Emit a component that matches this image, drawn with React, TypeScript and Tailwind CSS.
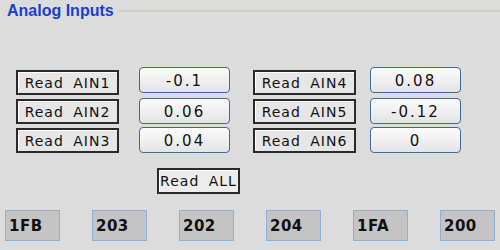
const readLeft = [
  { label: "Read AIN1", value: "-0.1" },
  { label: "Read AIN2", value: "0.06" },
  { label: "Read AIN3", value: "0.04" },
];
const readRight = [
  { label: "Read AIN4", value: "0.08" },
  { label: "Read AIN5", value: "-0.12" },
  { label: "Read AIN6", value: "0" },
];
const hex = ["1FB", "203", "202", "204", "1FA", "200"];

function ReadButton({ label }: { label: string }) {
  return (
    <div className="h-[25px] w-[103px] border-2 border-[#2a2a2a] bg-[#e6e6e6] shadow-[inset_1px_1px_0_#ffffff] flex items-center justify-center text-[14px] tracking-[1px] [word-spacing:4px] text-[#111] font-['DejaVu_Sans',sans-serif] leading-none">
      {label}
    </div>
  );
}

function ValueBox({ value }: { value: string }) {
  return (
    <div className="h-[26px] w-[91px] rounded-[4px] border border-[#3f6a9a] bg-gradient-to-b from-[#fbfbfb] to-[#e4e4e4] flex items-center justify-center text-[15px] tracking-[2px] text-[#111] font-['DejaVu_Sans',sans-serif] leading-none pt-[2px]">
      {value}
    </div>
  );
}

function Column({ rows, gap }: { rows: { label: string; value: string }[]; gap: string }) {
  return (
    <div className="flex flex-col gap-[3px]">
      {rows.map((r, i) => (
        <div key={r.label} className={"flex items-start " + gap}>
          <div className={i === 0 ? "pt-[3px]" : "pt-[1px]"}>
            <ReadButton label={r.label} />
          </div>
          <ValueBox value={r.value} />
        </div>
      ))}
    </div>
  );
}

export default function App() {
  return (
    <div className="w-[500px] h-[250px] bg-[#dcdcdc] overflow-hidden flex flex-col">
      <div className="flex items-center pl-[7px] pt-[1px] h-[21px]">
        <span className="text-[16px] font-bold text-[#1740d0] font-['Liberation_Sans',sans-serif] leading-none">
          Analog Inputs
        </span>
        <div className="flex-1 ml-[5px] h-[2px] bg-[#cfcfbf]" />
      </div>

      <div className="flex gap-[23px] pl-[16px] pt-[46px]">
        <Column rows={readLeft} gap="gap-[20px]" />
        <Column rows={readRight} gap="gap-[14px]" />
      </div>

      <div className="pl-[157px] pt-[15px]">
        <div className="h-[26px] w-[83px] border-2 border-[#2a2a2a] bg-[#ececec] shadow-[inset_1px_1px_0_#ffffff] flex items-center justify-center text-[14px] tracking-[1px] [word-spacing:4px] text-[#111] font-['DejaVu_Sans',sans-serif] leading-none">
          Read ALL
        </div>
      </div>

      <div className="flex justify-between px-[5px] pt-[16px]">
        {hex.map((h) => (
          <div
            key={h}
            className="h-[31px] w-[55px] border border-[#8eb0d2] bg-[#c4c4c4] flex items-center pl-[3px] pt-[2px] text-[15px] font-bold tracking-[0.5px] text-[#111] font-['DejaVu_Sans',sans-serif] leading-none"
          >
            {h}
          </div>
        ))}
      </div>
    </div>
  );
}
